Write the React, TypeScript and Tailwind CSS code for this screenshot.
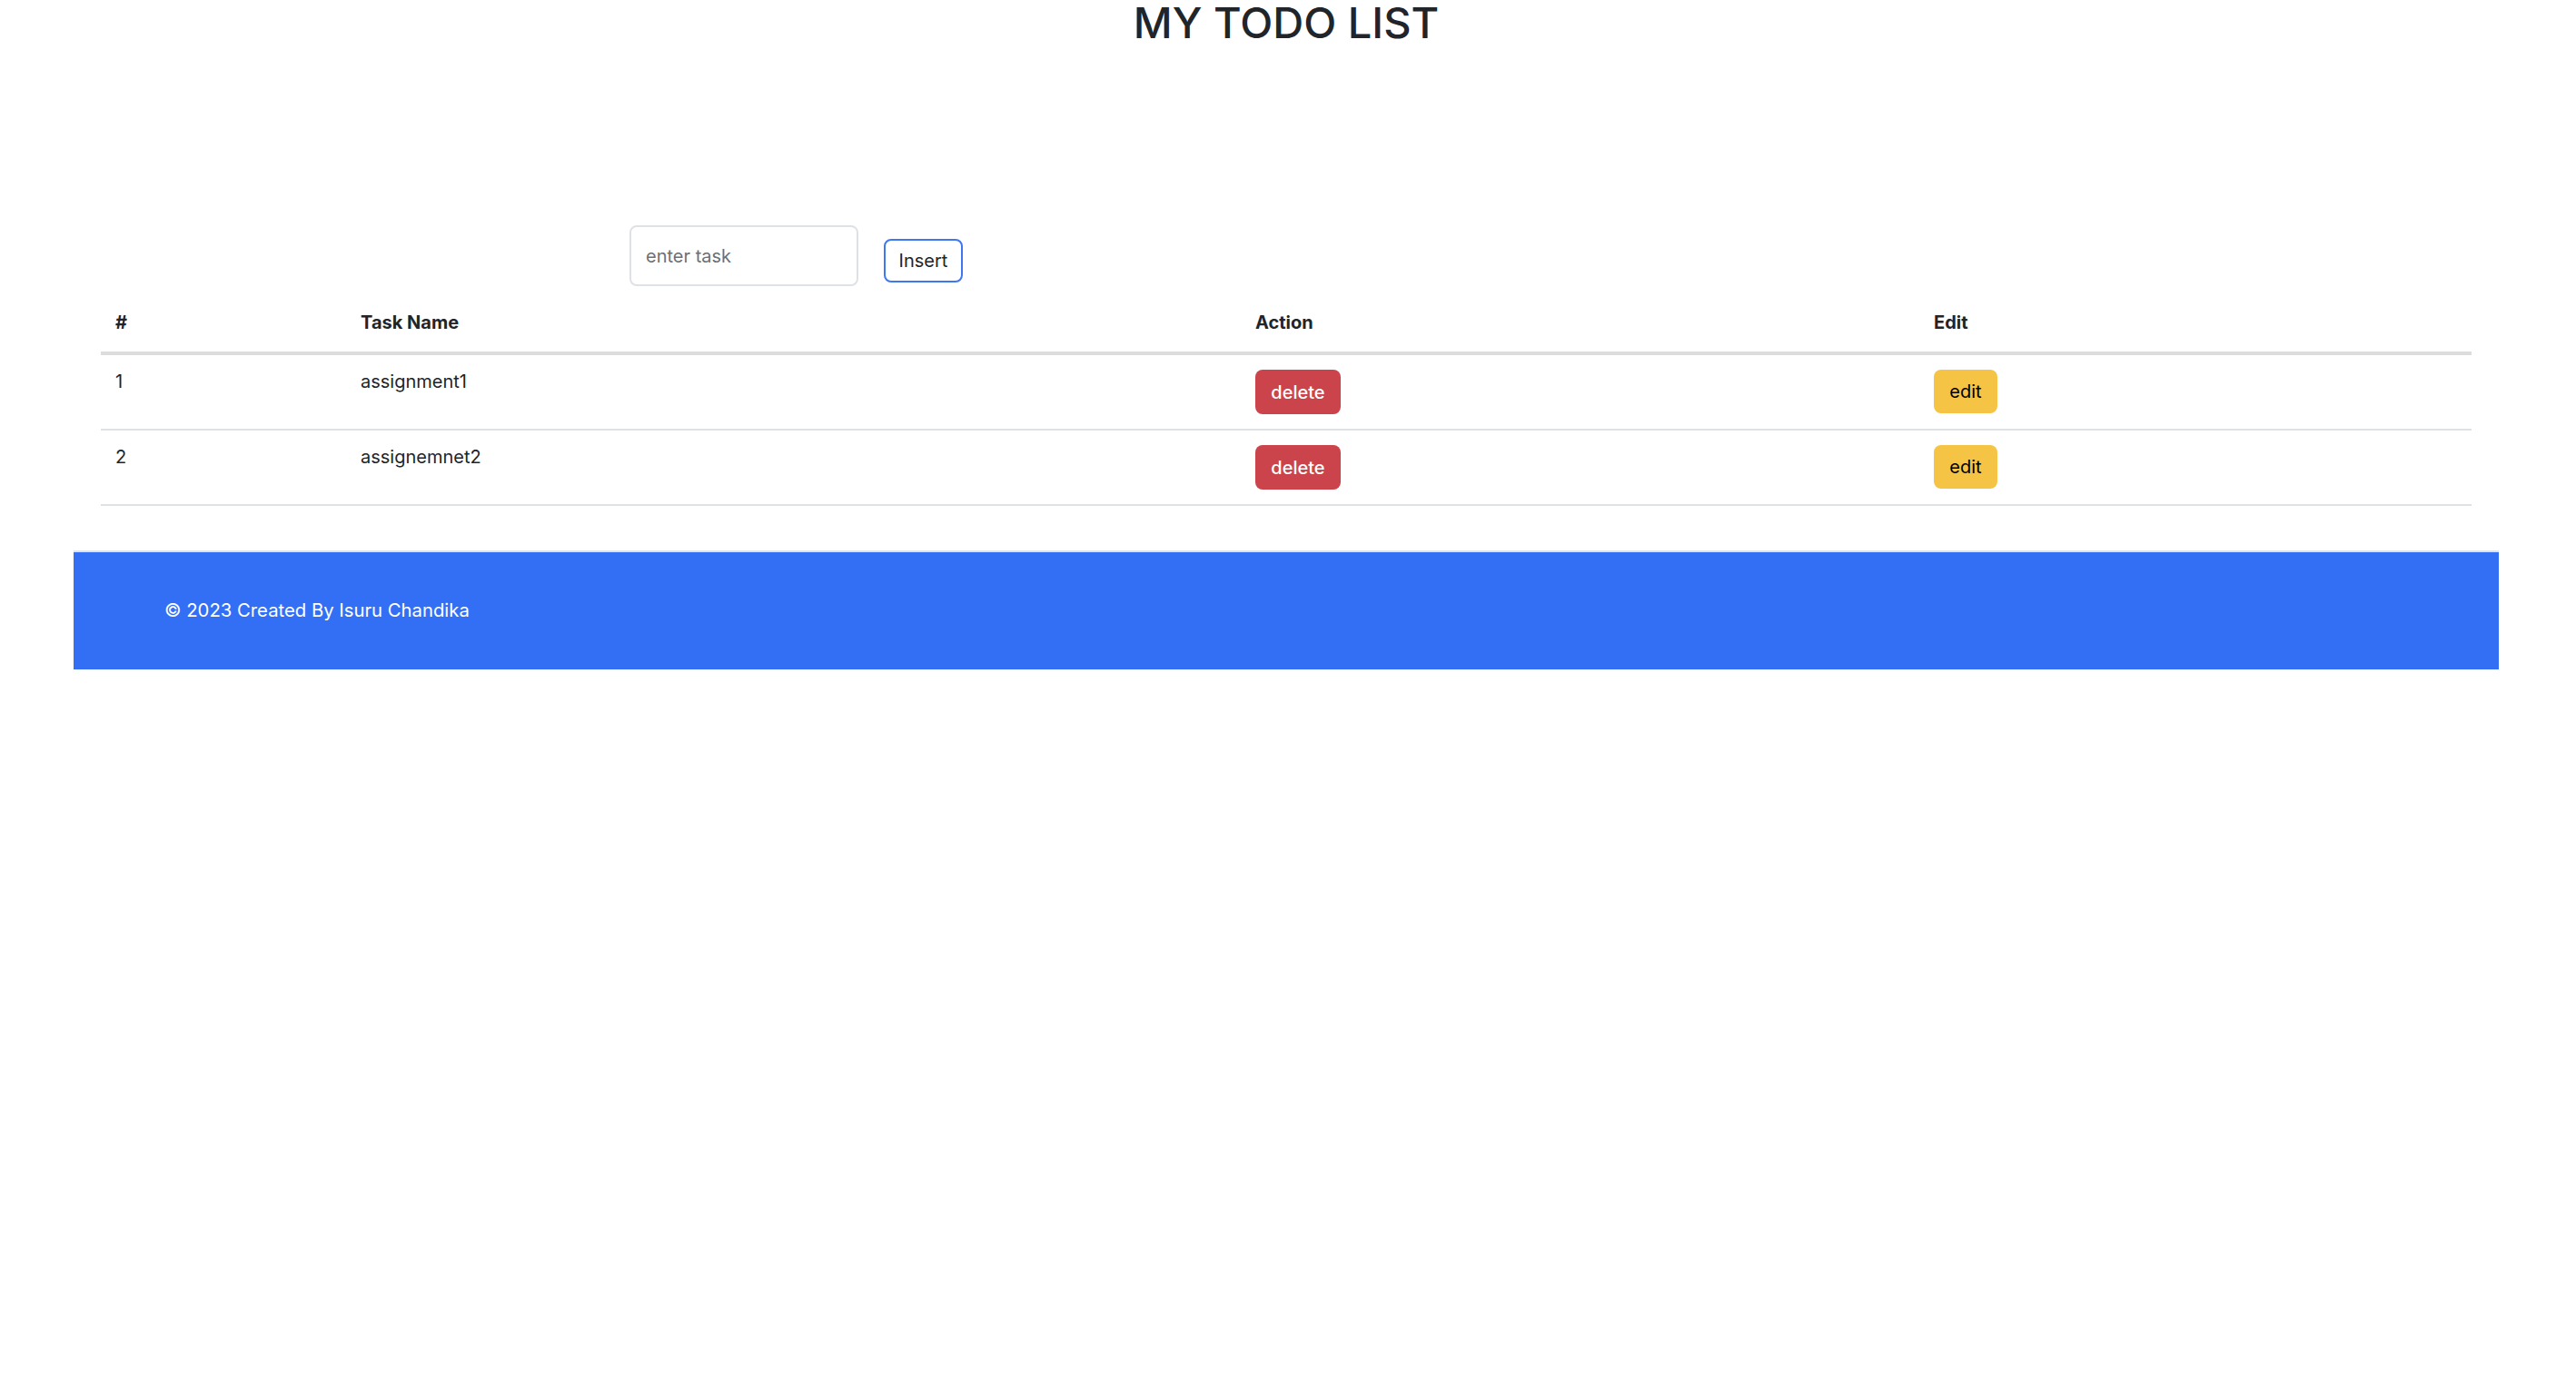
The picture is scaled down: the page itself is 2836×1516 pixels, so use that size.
const tasks = [
  { id: 1, name: "assignment1" },
  { id: 2, name: "assignemnet2" },
];

export default function App() {
  return (
    <div className="w-full bg-white pr-[4px] font-['Inter','Liberation_Sans',sans-serif] text-[#212529]">
      <h1 className="text-center text-[47px] leading-[50px] font-medium">MY TODO LIST</h1>

      <div className="mx-auto mt-[198px] flex w-[2610px] items-start pl-[582px]">
        <input
          type="text"
          placeholder="enter task"
          className="h-[67px] w-[252px] rounded-[8px] border-2 border-[#dee2e6] bg-white pl-[16px] text-[20px] text-[#212529] outline-none placeholder:text-[#6c7075]"
        />
        <button className="ml-[28px] mt-[15px] h-[48px] w-[87px] rounded-[8px] border-2 border-[#3d78f2] bg-white text-[20px] text-[#212529]">
          Insert
        </button>
      </div>

      <div className="mx-auto mt-[9px] w-[2610px]">
        <table className="w-full table-fixed border-collapse text-left text-[20px]">
          <colgroup>
            <col className="w-[270px]" />
            <col className="w-[985px]" />
            <col className="w-[747px]" />
            <col className="w-[608px]" />
          </colgroup>
          <thead>
            <tr className="border-b-4 border-[#dcdcdc]">
              <th className="px-[16px] py-[16px] font-bold leading-[31px]">#</th>
              <th className="px-[16px] py-[16px] font-bold leading-[31px]">Task Name</th>
              <th className="px-[16px] py-[16px] font-bold leading-[31px]">Action</th>
              <th className="px-[16px] py-[16px] font-bold leading-[31px]">Edit</th>
            </tr>
          </thead>
          <tbody>
            {tasks.map((t) => (
              <tr key={t.id} className="border-b-2 border-[#dee2e6]">
                <td className="px-[16px] pb-[16px] pt-[15px] align-top leading-[28px]">{t.id}</td>
                <td className="px-[16px] pb-[16px] pt-[15px] align-top leading-[28px]">{t.name}</td>
                <td className="px-[16px] py-[16px] align-top">
                  <button className="h-[49px] w-[94px] rounded-[8px] bg-[#cc444b] text-[20px] font-medium text-white">
                    delete
                  </button>
                </td>
                <td className="px-[16px] py-[16px] align-top">
                  <button className="h-[48px] w-[70px] rounded-[8px] bg-[#f6c445] text-[20px] text-black">
                    edit
                  </button>
                </td>
              </tr>
            ))}
          </tbody>
        </table>
      </div>

      <footer className="mx-auto mt-[49px] flex h-[131px] w-[2670px] items-center border-t-2 border-[#dee2e6] bg-[#336ff4] pl-[100px] text-[20.3px] text-white">
        © 2023 Created By Isuru Chandika
      </footer>
    </div>
  );
}
